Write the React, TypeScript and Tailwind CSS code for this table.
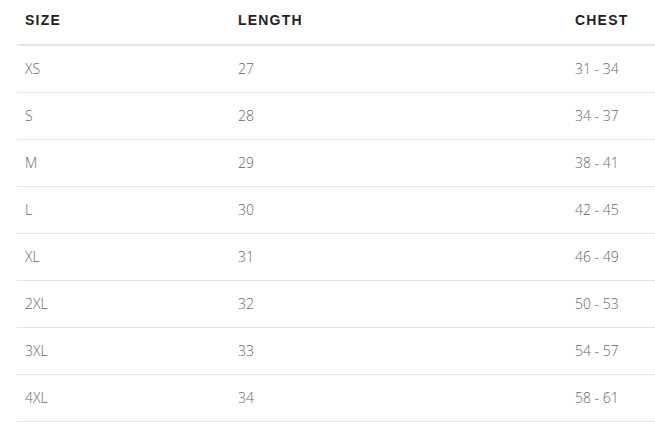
const rows = [
  ["XS", "27", "31 - 34"],
  ["S", "28", "34 - 37"],
  ["M", "29", "38 - 41"],
  ["L", "30", "42 - 45"],
  ["XL", "31", "46 - 49"],
  ["2XL", "32", "50 - 53"],
  ["3XL", "33", "54 - 57"],
  ["4XL", "34", "58 - 61"],
]

export default function App() {
  return (
    <div className="h-[424px] w-[655px] overflow-hidden bg-white pl-[17px]">
      <table className="w-[638px] table-fixed border-collapse">
        <colgroup>
          <col className="w-[213px]" />
          <col className="w-[337px]" />
          <col className="w-[88px]" />
        </colgroup>
        <thead>
          <tr className="h-[45px] border-b-2 border-[#e4e4e4] font-['Liberation_Sans',sans-serif] text-[14px] font-bold tracking-[1.2px] text-[#222]">
            <th className="px-2 pb-[4px] text-left">SIZE</th>
            <th className="px-2 pb-[4px] text-left">LENGTH</th>
            <th className="px-2 pb-[4px] text-left">CHEST</th>
          </tr>
        </thead>
        <tbody>
          {rows.map((r) => (
            <tr
              key={r[0]}
              className="h-[47px] border-b border-[#e4e4e4] font-['Open_Sans',sans-serif] text-[14px] font-light text-[#666]"
            >
              {r.map((c, i) => (
                <td key={i} className="px-2 text-left">
                  {c}
                </td>
              ))}
            </tr>
          ))}
        </tbody>
      </table>
    </div>
  )
}
